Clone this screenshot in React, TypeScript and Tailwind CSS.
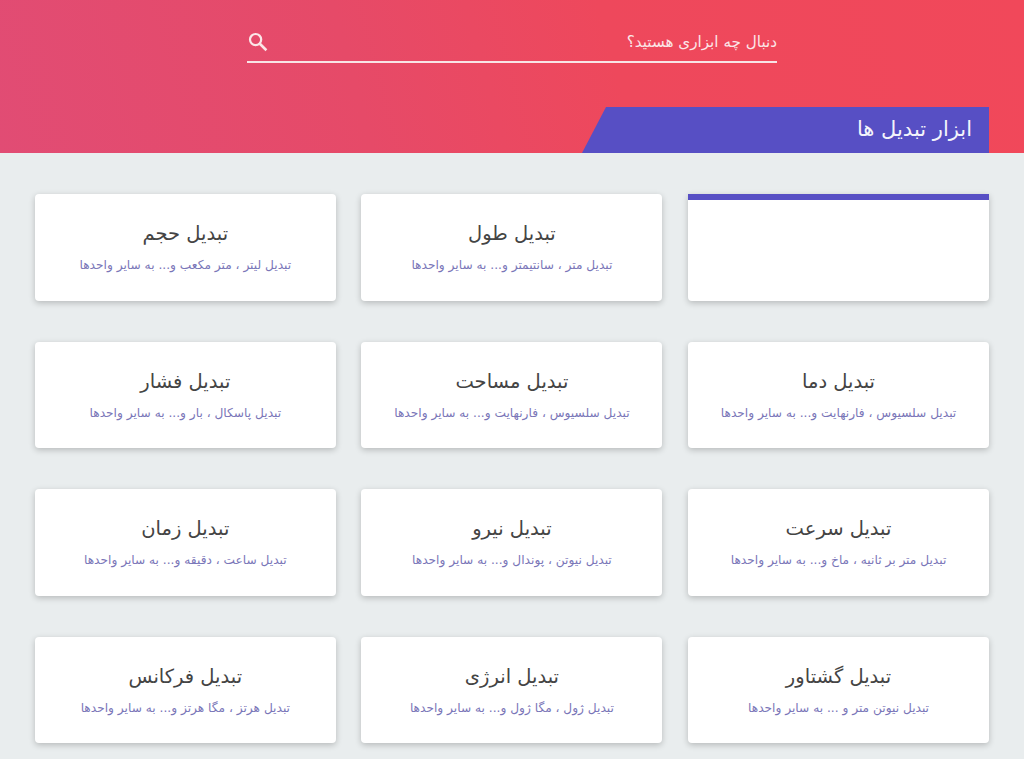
const tools = [
  { title: '', desc: '', accent: true },
  { title: 'تبدیل طول', desc: 'تبدیل متر ، سانتیمتر و... به سایر واحدها' },
  { title: 'تبدیل حجم', desc: 'تبدیل لیتر ، متر مکعب و... به سایر واحدها' },
  { title: 'تبدیل دما', desc: 'تبدیل سلسیوس ، فارنهایت و... به سایر واحدها' },
  { title: 'تبدیل مساحت', desc: 'تبدیل سلسیوس ، فارنهایت و... به سایر واحدها' },
  { title: 'تبدیل فشار', desc: 'تبدیل پاسکال ، بار و... به سایر واحدها' },
  { title: 'تبدیل سرعت', desc: 'تبدیل متر بر ثانیه ، ماخ و... به سایر واحدها' },
  { title: 'تبدیل نیرو', desc: 'تبدیل نیوتن ، پوندال و... به سایر واحدها' },
  { title: 'تبدیل زمان', desc: 'تبدیل ساعت ، دقیقه و... به سایر واحدها' },
  { title: 'تبدیل گشتاور', desc: 'تبدیل نیوتن متر و ... به سایر واحدها' },
  { title: 'تبدیل انرژی', desc: 'تبدیل ژول ، مگا ژول و... به سایر واحدها' },
  { title: 'تبدیل فرکانس', desc: 'تبدیل هرتز ، مگا هرتز و... به سایر واحدها' },
]

function ToolCard({ title, desc, accent }: { title: string; desc: string; accent?: boolean }) {
  if (accent) {
    return <div className="h-[106.5px] rounded-b-[4px] border-t-[6px] border-[#574fc4] bg-white shadow-[0_2px_6px_rgba(0,0,0,0.22)]" />
  }
  return (
    <div className="flex h-[106.5px] flex-col items-center rounded-[4px] bg-white pt-[25px] shadow-[0_2px_6px_rgba(0,0,0,0.22)]">
      <h3 className="text-[19.5px] leading-[30px] text-[#444444]">{title}</h3>
      <p className="mt-[8px] text-[12.2px] leading-[16px] text-[#7a76b8]">{desc}</p>
    </div>
  )
}

export default function App() {
  return (
    <div dir="rtl" className="h-[759px] overflow-hidden bg-[#e9edee] font-['DejaVu_Sans',sans-serif]">
      <header className="flex h-[153px] flex-col bg-[linear-gradient(75deg,#e14c74_0%,#e64a68_35%,#ee485c_60%,#f1485a_100%)]">
        <div className="mx-auto mt-[24px] flex h-[39px] w-[530px] items-center justify-between border-b-2 border-[#f8e4e6]">
          <span className="text-[15.2px] text-[#fbe6e8]">دنبال چه ابزاری هستید؟</span>
          <svg viewBox="0 0 20 20" className="mb-[2px] ml-[1px] h-[20px] w-[20px] fill-none stroke-[#fbe6e8]">
            <circle cx="7.6" cy="7.6" r="5.6" strokeWidth="2.2" />
            <path d="M11.8 11.8 18.4 18.2" strokeWidth="2.6" />
          </svg>
        </div>
        <div className="mt-auto mr-[35px] flex h-[46px] w-[407px] items-center bg-[#574fc4] pr-[17px] [clip-path:polygon(24px_0,100%_0,100%_100%,0_100%)]">
          <h2 className="text-[21px] text-[#f4f4fb]">ابزار تبدیل ها</h2>
        </div>
      </header>
      <main className="grid grid-cols-[301px_301px_301px] gap-x-[25.6px] gap-y-[41px] pr-[35px] pt-[41px]">
        {tools.map((tool, i) => (
          <ToolCard key={i} title={tool.title} desc={tool.desc} accent={tool.accent} />
        ))}
      </main>
    </div>
  )
}
